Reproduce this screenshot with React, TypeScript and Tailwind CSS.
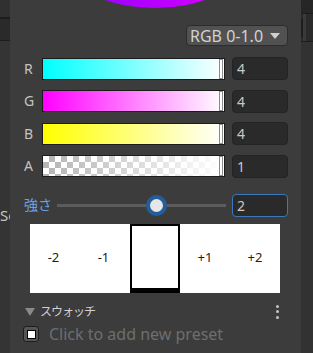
import type { ReactNode } from "react";

const font = { fontFamily: '"Noto Sans", "Noto Sans CJK JP", sans-serif' };

function Field({ value, focused }: { value: string; focused?: boolean }) {
  return (
    <div
      className={
        "flex h-[23px] w-[56px] items-center rounded-[4px] bg-[#2a2a2a] pl-[4px] text-[14px] text-[#c8c8c8] " +
        (focused ? "border border-[#3a79bb]" : "border border-[#232323]")
      }
    >
      {value}
    </div>
  );
}

function ChannelRow({ label, bar }: { label: string; bar: ReactNode }) {
  return (
    <div className="flex h-[23px] items-center">
      <div className="w-[18px] text-[14px] leading-none text-[#c4c4c4]">{label}</div>
      <div className="relative h-[22px] w-[183px] border border-[#1b1b1b]">
        {bar}
        <div className="absolute right-[1px] top-0 h-full w-[4px] border border-[#8a8a8a] bg-white" />
      </div>
      <div className="ml-[7px]">
        <Field value="4" />
      </div>
    </div>
  );
}

export default function App() {
  return (
    <div className="flex h-[353px] w-[313px] overflow-hidden bg-[#2e2e2e]" style={font}>
      {/* window behind, left */}
      <div className="flex w-[10px] shrink-0 flex-col overflow-hidden">
        <div className="h-[17px] bg-[#303030]" />
        <div className="h-[2px] bg-[#1c1c1c]" />
        <div className="h-[21px] bg-[#2a2a2a]" />
        <div className="h-[1px] bg-[#1c1c1c]" />
        <div className="h-[165px] bg-[#343434]" />
        <div className="whitespace-nowrap bg-[#343434] text-[15px] leading-[18px] text-[#c4c4c4]">Sc</div>
        <div className="flex-1 bg-[#343434]" />
      </div>

      {/* colour picker panel */}
      <div className="relative w-[291px] shrink-0 overflow-hidden bg-[#3c3c3c]">
        <div className="ml-[-15px] mt-[-312px] h-[320px] w-[320px] rounded-full bg-[linear-gradient(90deg,#6c00ff,#b000ff_45%,#ff00ff)]" />

        <div className="mt-[17px] flex justify-end pr-[13px]">
          <div className="flex h-[21px] w-[102px] items-center justify-between rounded-[4px] border border-[#2c2c2c] bg-[#515151] pl-[3px] pr-[7px] text-[16px] leading-none text-[#d2d2d2]">
            <span>RGB 0-1.0</span>
            <svg width="10" height="6" viewBox="0 0 10 6">
              <path d="M0 0h10L5 6z" fill="#cfcfcf" />
            </svg>
          </div>
        </div>

        <div className="mt-[11px] flex flex-col gap-[9.5px] pl-[14px]">
          <ChannelRow label="R" bar={<div className="h-full w-full bg-[linear-gradient(90deg,#00ffff,#ffffff)]" />} />
          <ChannelRow label="G" bar={<div className="h-full w-full bg-[linear-gradient(90deg,#ff00ff,#ffffff)]" />} />
          <ChannelRow label="B" bar={<div className="h-full w-full bg-[linear-gradient(90deg,#ffff00,#ffffff)]" />} />
          <div className="flex h-[23px] items-center">
            <div className="w-[18px] text-[14px] leading-none text-[#c4c4c4]">A</div>
            <div className="relative h-[22px] w-[183px] border border-[#1b1b1b] bg-white bg-[repeating-conic-gradient(#b4b4b4_0_25%,#ffffff_0_50%)] bg-[length:12px_12px]">
              <div className="h-full w-full bg-[linear-gradient(90deg,rgba(255,255,255,0),#ffffff)]" />
              <div className="absolute right-[1px] top-0 h-full w-[4px] border border-[#8a8a8a] bg-white" />
            </div>
            <div className="ml-[7px]">
              <Field value="1" />
            </div>
          </div>
        </div>

        <div className="mt-[16px] flex h-[23px] items-center pl-[14px]">
          <div className="w-[33px] shrink-0 text-[14px] leading-none text-[#6aa0e4]">強さ</div>
          <div className="relative flex h-[23px] w-[175px] shrink-0 items-center">
            <div className="h-[3px] w-[169px] bg-[#5c5c5c]" />
            <div className="absolute left-[89px] top-[1px] h-[21px] w-[21px] rounded-full border-[4px] border-[#235e9c] bg-[#e6e6e6]" />
          </div>
          <Field value="2" focused />
        </div>

        <div className="ml-[20px] mt-[7px] grid h-[69px] w-[250px] grid-cols-5 bg-white text-[13px] text-[#1e1e1e]">
          <div className="flex items-center justify-center pr-[3px]">-2</div>
          <div className="flex items-center justify-center pr-[3px]">-1</div>
          <div className="border-2 border-b-[5px] border-black bg-white" />
          <div className="flex items-center justify-center">+1</div>
          <div className="flex items-center justify-center">+2</div>
        </div>

        <div className="mt-[11px] flex h-[16px] items-center pl-[15px] pr-[22px]">
          <svg width="10" height="8" viewBox="0 0 10 8">
            <path d="M0 0h10L5 8z" fill="#8a8a8a" />
          </svg>
          <span className="ml-[5px] text-[12px] tracking-[-1px] text-[#d0d0d0]">スウォッチ</span>
          <div className="ml-auto flex flex-col gap-[2.5px]">
            <div className="h-[3px] w-[3px] rounded-full bg-[#c4c4c4]" />
            <div className="h-[3px] w-[3px] rounded-full bg-[#c4c4c4]" />
            <div className="h-[3px] w-[3px] rounded-full bg-[#c4c4c4]" />
          </div>
        </div>

        <div className="mt-[6px] flex h-[17px] items-center pl-[13px]">
          <div className="flex h-[16px] w-[16px] items-center justify-center rounded-[3px] border border-[#1e1e1e] bg-[#555555]">
            <div className="h-[9px] w-[9px] border border-black bg-white" />
          </div>
          <span className="ml-[10px] text-[16px] leading-none text-[#6e6e6e]">Click to add new preset</span>
        </div>
      </div>

      {/* window behind, right */}
      <div className="flex w-[12px] shrink-0 flex-col">
        <div className="h-[13px] bg-[#262626]" />
        <div className="h-[1px] bg-[#1c1c1c]" />
        <div className="flex h-[27px] bg-[#2a2a2a]">
          <div className="my-[4px] w-[2px] bg-[#1e1e1e]" />
          <div className="w-[3px] bg-[#3a3a3a]" />
        </div>
        <div className="h-[1px] bg-[#1c1c1c]" />
        <div className="flex-1 bg-[#323232]" />
      </div>
    </div>
  );
}
